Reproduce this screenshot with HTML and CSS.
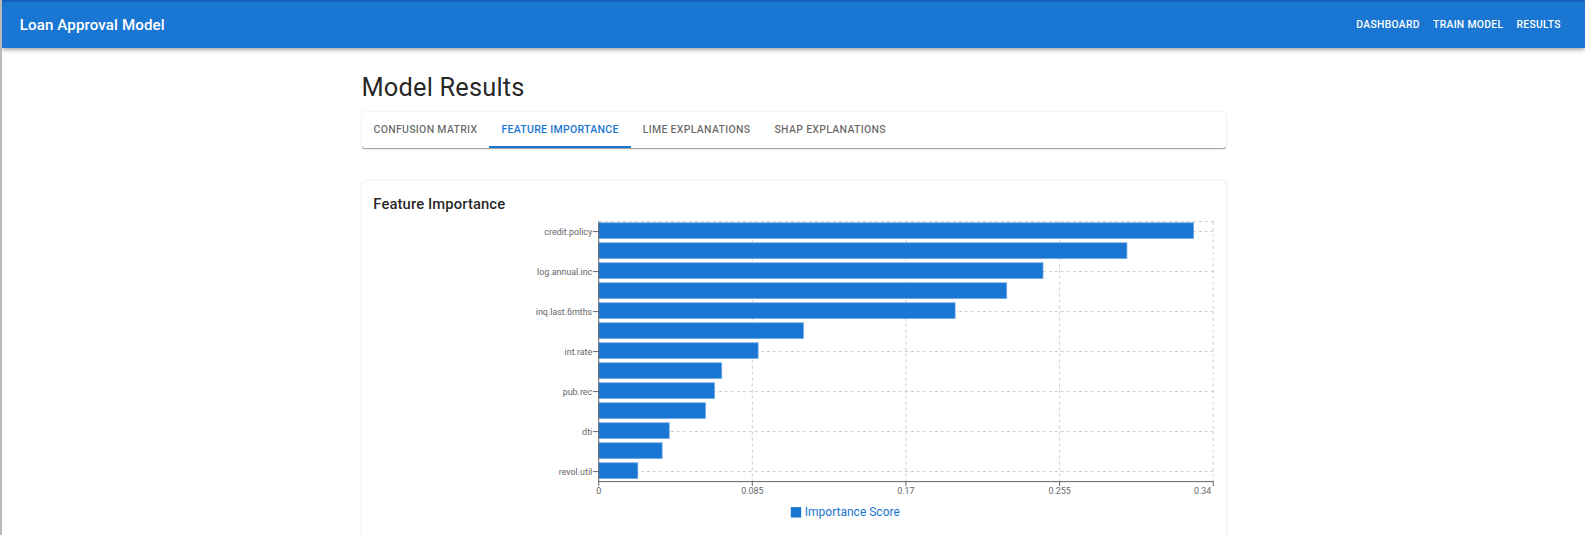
FILE: index.html
```html
<!DOCTYPE html>
<html lang="en">
<head>
<meta charset="utf-8">
<title>Loan Approval Model</title>
<link rel="stylesheet" href="styles.css">
</head>
<body>
<header class="appbar">
  <div class="brand">Loan Approval Model</div>
  <nav class="nav">
    <span class="nav-btn">Dashboard</span>
    <span class="nav-btn">Train Model</span>
    <span class="nav-btn">Results</span>
  </nav>
</header>
<main class="container">
  <h1 class="page-title">Model Results</h1>
  <div class="tabs">
    <div class="tab">Confusion Matrix</div>
    <div class="tab active">Feature Importance</div>
    <div class="tab">LIME Explanations</div>
    <div class="tab">SHAP Explanations</div>
  </div>
  <section class="card">
    <h2 class="card-title">Feature Importance</h2>
    <svg class="chart" width="840" height="330" viewBox="0 0 840 330">
      <g transform="translate(-372.8,-216.7)">
        <g class="grid" stroke="#cccccc" stroke-dasharray="3 3" stroke-width="1" fill="none">
          <line x1="598.5" y1="222.3" x2="1213" y2="222.3"/>
          <line x1="598.5" y1="232.3" x2="1213" y2="232.3"/>
          <line x1="598.5" y1="272.3" x2="1213" y2="272.3"/>
          <line x1="598.5" y1="312.3" x2="1213" y2="312.3"/>
          <line x1="598.5" y1="352.3" x2="1213" y2="352.3"/>
          <line x1="598.5" y1="392.3" x2="1213" y2="392.3"/>
          <line x1="598.5" y1="432.3" x2="1213" y2="432.3"/>
          <line x1="598.5" y1="472.3" x2="1213" y2="472.3"/>
          <line x1="752.1" y1="222.3" x2="752.1" y2="482.3"/>
          <line x1="905.75" y1="222.3" x2="905.75" y2="482.3"/>
          <line x1="1059.4" y1="222.3" x2="1059.4" y2="482.3"/>
          <line x1="1213" y1="222.3" x2="1213" y2="482.3"/>
        </g>
        <g class="bars" fill="#1976d2" stroke="#6aa6e6" stroke-width="0.8">
          <rect x="598.5" y="223.5" width="594.9" height="15.6"/>
          <rect x="598.5" y="243.5" width="528.2" height="15.6"/>
          <rect x="598.5" y="263.5" width="444.3" height="15.6"/>
          <rect x="598.5" y="283.5" width="408.0" height="15.6"/>
          <rect x="598.5" y="303.5" width="356.4" height="15.6"/>
          <rect x="598.5" y="323.5" width="204.8" height="15.6"/>
          <rect x="598.5" y="343.5" width="159.4" height="15.6"/>
          <rect x="598.5" y="363.5" width="123.0" height="15.6"/>
          <rect x="598.5" y="383.5" width="115.9" height="15.6"/>
          <rect x="598.5" y="403.5" width="106.8" height="15.6"/>
          <rect x="598.5" y="423.5" width="70.5" height="15.6"/>
          <rect x="598.5" y="443.5" width="63.4" height="15.6"/>
          <rect x="598.5" y="463.5" width="39.1" height="15.6"/>
        </g>
        <g class="axes" stroke="#666666" stroke-width="1">
          <line x1="598.5" y1="222.3" x2="598.5" y2="482.8"/>
          <line x1="598" y1="482.3" x2="1213.5" y2="482.3"/>
          <line x1="592.6" y1="232.3" x2="598.5" y2="232.3"/>
          <line x1="592.6" y1="272.3" x2="598.5" y2="272.3"/>
          <line x1="592.6" y1="312.3" x2="598.5" y2="312.3"/>
          <line x1="592.6" y1="352.3" x2="598.5" y2="352.3"/>
          <line x1="592.6" y1="392.3" x2="598.5" y2="392.3"/>
          <line x1="592.6" y1="432.3" x2="598.5" y2="432.3"/>
          <line x1="592.6" y1="472.3" x2="598.5" y2="472.3"/>
          <line x1="598.5" y1="482.3" x2="598.5" y2="486.7"/>
          <line x1="752.1" y1="482.3" x2="752.1" y2="486.7"/>
          <line x1="905.75" y1="482.3" x2="905.75" y2="486.7"/>
          <line x1="1059.4" y1="482.3" x2="1059.4" y2="486.7"/>
          <line x1="1213" y1="482.3" x2="1213" y2="486.7"/>
        </g>
        <g class="ylabels" text-anchor="end">
          <text x="592" y="232.3" dy="0.355em">credit.policy</text>
          <text x="592" y="272.3" dy="0.355em">log.annual.inc</text>
          <text x="592" y="312.3" dy="0.355em">inq.last.6mths</text>
          <text x="592" y="352.3" dy="0.355em">int.rate</text>
          <text x="592" y="392.3" dy="0.355em">pub.rec</text>
          <text x="592" y="432.3" dy="0.355em">dti</text>
          <text x="592" y="472.3" dy="0.355em">revol.util</text>
        </g>
        <g class="xlabels" text-anchor="middle">
          <text x="598.5" y="494.5">0</text>
          <text x="752.1" y="494.5">0.085</text>
          <text x="905.75" y="494.5">0.17</text>
          <text x="1059.4" y="494.5">0.255</text>
          <text x="1211" y="494.5" text-anchor="end">0.34</text>
        </g>
        <g class="legend">
          <rect x="790.6" y="507.8" width="10.4" height="10.4" fill="#1976d2"/>
          <text x="804.6" y="517.2">Importance Score</text>
        </g>
      </g>
    </svg>
  </section>
</main>
</body>
</html>
```

FILE: styles.css
```css
html, body {
  margin: 0;
  padding: 0;
  background: #ffffff;
}

body {
  border-left: 2px solid #b9b9b9;
  min-height: 535px;
  box-sizing: border-box;
  font-family: Roboto, "Liberation Sans", Arial, sans-serif;
  color: rgba(0, 0, 0, 0.87);
  overflow: hidden;
}

.appbar {
  position: relative;
  z-index: 2;
  height: 46px;
  border-top: 2px solid #1561bb;
  background: #1976d2;
  color: #ffffff;
  display: flex;
  align-items: center;
  justify-content: space-between;
  padding: 0 17.6px 0 17.8px;
  box-shadow: 0 1.5px 3px -0.7px rgba(0, 0, 0, 0.2),
              0 3px 3.7px 0 rgba(0, 0, 0, 0.14),
              0 0.7px 7.4px 0 rgba(0, 0, 0, 0.12);
}

.brand {
  font-size: 15.1px;
  font-weight: 500;
  line-height: 1.6;
  letter-spacing: 0.11px;
}

.nav {
  display: flex;
  align-items: center;
}

.nav-btn {
  padding: 4.4px 6.6px;
  font-size: 10.36px;
  font-weight: 500;
  line-height: 1.75;
  letter-spacing: 0.296px;
  text-transform: uppercase;
}

.container {
  width: 864px;
  margin: 0 auto;
}

.page-title {
  margin: 23.7px 0 8.8px;
  font-size: 25.4px;
  font-weight: 400;
  line-height: 1.235;
  letter-spacing: 0.185px;
}

.tabs {
  display: flex;
  height: 36px;
  border-radius: 3px;
  background: #ffffff;
  box-shadow: 0 1.5px 0.75px -0.75px rgba(0, 0, 0, 0.2),
              0 0.75px 0.75px 0 rgba(0, 0, 0, 0.14),
              0 0.75px 2.2px 0 rgba(0, 0, 0, 0.12);
}

.tab {
  position: relative;
  display: flex;
  align-items: center;
  padding: 0 12px;
  font-size: 10.5px;
  font-weight: 500;
  letter-spacing: 0.3px;
  text-transform: uppercase;
  color: rgba(0, 0, 0, 0.6);
  white-space: nowrap;
}

.tab.active {
  color: #1976d2;
}

.tab.active::after {
  content: "";
  position: absolute;
  left: 0;
  right: 0;
  bottom: 0;
  height: 2px;
  background: #1976d2;
}

.card {
  margin-top: 33px;
  padding: 11.84px;
  border-radius: 3px;
  background: #ffffff;
  box-shadow: 0 1.5px 0.75px -0.75px rgba(0, 0, 0, 0.2),
              0 0.75px 0.75px 0 rgba(0, 0, 0, 0.14),
              0 0.75px 2.2px 0 rgba(0, 0, 0, 0.12);
}

.card-title {
  margin: 0;
  font-size: 14.8px;
  font-weight: 500;
  line-height: 1.6;
  letter-spacing: 0.11px;
}

.chart {
  display: block;
  overflow: visible;
}

.ylabels text,
.xlabels text {
  font-family: Roboto, "Liberation Sans", Arial, sans-serif;
  font-size: 8.9px;
  fill: #666666;
}

.legend text {
  font-family: Roboto, "Liberation Sans", Arial, sans-serif;
  font-size: 12px;
  fill: #1976d2;
}
```
